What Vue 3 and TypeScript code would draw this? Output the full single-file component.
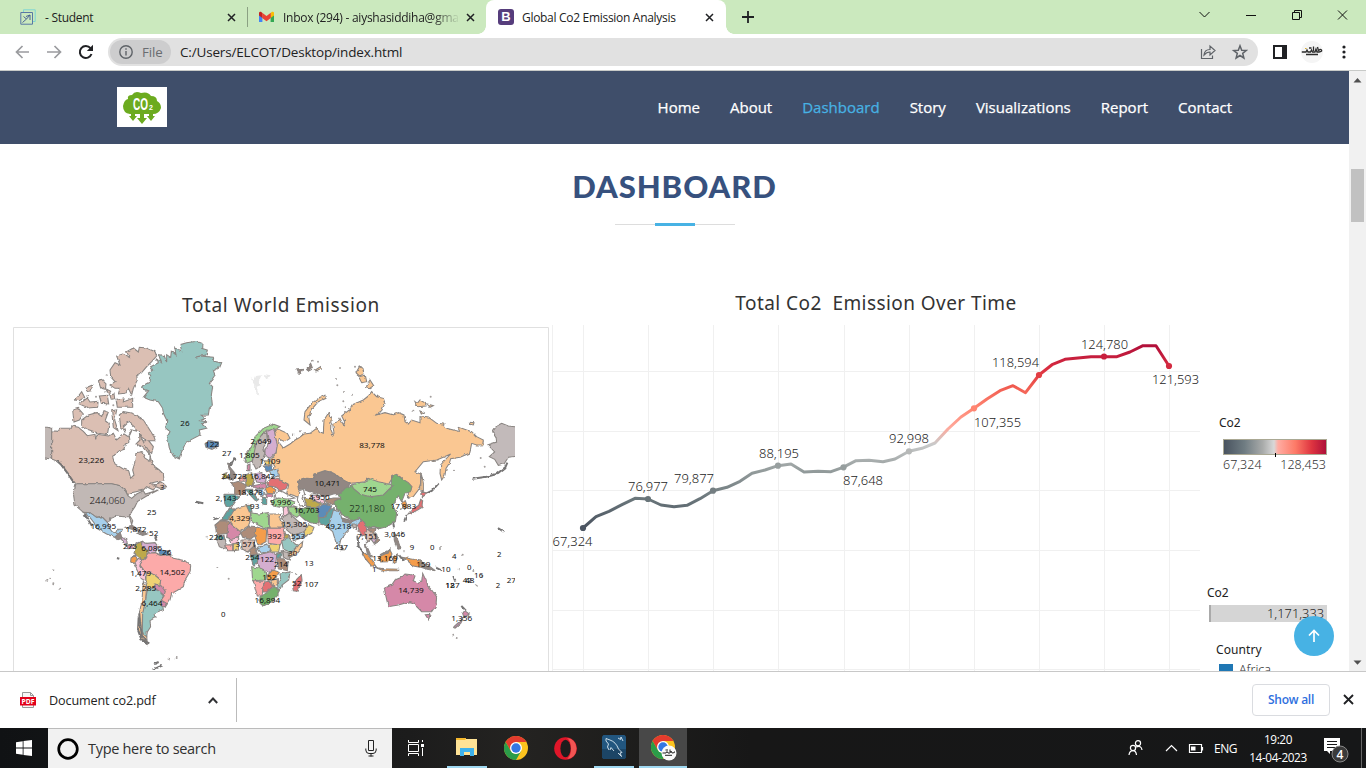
<script setup lang="ts">
interface Land { c: string; d: string }
interface Label { t: string; x: number; y: number; big?: boolean }

const nav: string[] = ['Home', 'About', 'Dashboard', 'Story', 'Visualizations', 'Report', 'Contact']

const ca = '#dbbfb3', us = '#c1b8b5', teal = '#97c6c1', or = '#fac792', gr = '#9fd78f', dg = '#74b16d'
const pu = '#d4aed0', pk = '#fcaaa9', lp = '#f9c6d8', mg = '#d588a8', br = '#ad8c79', go = '#bda94c'
const lb = '#a7d0eb', rd = '#e37073', dt = '#5fa3a0', bl = '#5c8bb8', yl = '#efd273', og = '#f49d4b', dk = '#928783'

/* Map units are a third of a pixel. */
const lands: Land[] = [
  { c: teal, d: '428,197 450,185 452,170 444,160 458,150 452,140 475,128 468,116 484,128 476,104 492,106 500,126 500,104 512,112 514,94 528,104 524,84 545,92 540,74 560,68 590,64 606,70 605,85 622,90 618,105 585,112 600,108 640,112 642,124 662,128 655,145 640,152 645,165 628,190 638,200 634,225 637,255 628,265 625,285 604,286 616,295 600,302 624,305 605,312 620,325 598,330 600,345 575,358 555,372 545,395 538,417 520,408 508,385 502,350 510,335 498,325 500,300 490,280 488,265 475,245 450,240 430,232 446,212 425,205' },
  { c: ca, d: '330,150 345,128 360,135 350,108 368,102 388,112 380,95 400,84 415,96 418,82 440,84 465,95 470,108 455,125 440,140 425,158 410,165 412,180 400,205 395,225 385,205 375,220 355,222 360,205 345,205 330,195 345,185 332,170' },
  { c: ca, d: '348,238 372,234 370,246 398,235 398,262 352,262' },
  { c: ca, d: '258,203 278,195 274,212 262,214' },
  { c: ca, d: '295,182 305,178 318,192 316,208 302,204' },
  { c: ca, d: '226,240 245,215 254,232 238,242' },
  { c: ca, d: '238,252 262,234 270,246 294,244 293,262 265,264' },
  { c: ca, d: '298,228 322,226 326,252 304,250' },
  { c: ca, d: '320,208 332,214 326,224' },
  { c: ca, d: '330,226 342,222 344,236 334,238' },
  { c: ca, d: '218,270 235,265 250,282 238,300 222,306' },
  { c: ca, d: '245,300 265,285 290,278 305,290 312,272 325,276 316,300 328,310 322,344 296,340 262,328 245,316' },
  { c: ca, d: '335,272 350,270 344,300 354,332 340,322' },
  { c: ca, d: '358,285 370,275 390,278 410,285 430,300 440,315 462,350 466,362 446,362 460,380 455,400 440,390 425,375 424,362 440,362 415,345 405,322 385,305 370,318 376,334 362,322' },
  { c: us, d: '125,322 142,322 155,325 155,417 125,413' },
  { c: ca, d: '155,332 175,334 180,325 215,325 215,318 235,322 250,334 262,347 285,343 287,358 292,343 325,348 340,340 350,360 362,350 372,342 385,350 395,330 420,345 435,375 445,390 455,425 465,440 478,450 490,462 492,480 470,485 450,490 470,495 460,510 440,500 430,510 395,518 384,526 375,510 360,497 335,491 228,491 215,480 205,460 190,445 175,425 155,417' },
  { c: '#fff', d: '388,348 396,330 418,335 420,360 408,372 432,382 450,405 450,424 434,414 425,395 408,398 404,430 398,450 402,465 392,475 386,452 370,447 345,432 338,412 352,394 372,387 376,372 390,366' },
  { c: ca, d: '462,498 480,485 490,490 500,500 480,505' },
  { c: us, d: '228,491 335,491 360,497 375,510 384,528 395,535 410,522 430,512 436,522 475,510 440,528 412,545 405,560 388,585 398,602 395,614 388,590 375,590 350,588 330,595 325,610 305,590 290,592 270,578 250,577 225,555 220,520' },
  { c: lb, d: '250,577 270,578 290,592 305,590 325,610 328,624 337,636 350,638 355,628 367,628 362,642 345,652 320,642 290,625 282,608 268,590' },
  { c: dk, d: '345,652 354,640 362,642 366,655 352,660' },
  { c: pu, d: '362,655 380,655 382,672 372,668' },
  { c: mg, d: '372,672 388,680 400,674 402,684 384,686' },
  { c: dk, d: '376,622 396,616 428,636 410,632' }, { c: dk, d: '412,640 426,636 442,642 428,646' },
  { c: go, d: '408,672 426,664 424,680 442,690 440,714 428,722 418,712 402,700' },
  { c: pu, d: '426,664 440,670 465,668 474,680 466,698 450,705 442,690 424,680' },
  { c: bl, d: '470,684 482,690 510,694 506,708 484,706' },
  { c: og, d: '393,714 406,706 412,718 400,730 392,726' },
  { c: lp, d: '402,732 415,715 430,722 420,737 434,750 438,784 424,776' },
  { c: pk, d: '440,714 442,700 466,698 484,706 508,702 520,715 555,722 572,738 570,755 555,780 550,800 530,812 515,820 510,840 495,862 480,845 492,828 478,805 482,780 465,765 440,760 430,748 420,735 428,720' },
  { c: yl, d: '438,762 450,758 465,766 482,780 480,792 466,795 460,806 444,802 438,782' },
  { c: mg, d: '466,792 484,798 496,814 492,826 478,814 464,804' },
  { c: mg, d: '483,840 500,850 492,861 482,858' },
  { c: or, d: '430,785 440,800 436,850 428,885 426,930 440,948 442,972 425,955 415,930 418,880 426,840' },
  { c: teal, d: '444,802 460,806 478,814 490,828 483,842 487,870 462,880 465,893 450,902 452,920 442,936 440,950 427,940 428,880 435,850 440,820' },
  { c: bl, d: '615,372 625,362 655,366 656,378 636,388 618,382' },
  { c: or, d: '822,325 840,330 862,340 870,355 855,365 838,358 836,366 850,384 870,372 885,360 895,355 912,342 930,340 950,325 955,334 970,340 972,300 985,280 993,295 992,330 998,345 1002,340 998,310 1015,305 1020,295 1030,314 1034,306 1025,288 1048,270 1056,255 1090,240 1105,228 1115,215 1130,230 1150,235 1155,250 1145,272 1125,286 1155,278 1180,285 1195,278 1212,285 1215,305 1225,312 1235,300 1260,308 1260,290 1290,295 1310,310 1330,312 1340,325 1375,334 1378,322 1400,330 1415,335 1430,350 1450,360 1448,374 1430,375 1415,370 1412,385 1408,400 1380,412 1352,416 1348,430 1338,445 1335,465 1325,480 1320,460 1322,435 1335,420 1352,402 1330,412 1310,420 1270,425 1245,455 1262,462 1262,490 1255,510 1240,530 1225,535 1225,510 1235,505 1220,490 1200,470 1185,465 1170,485 1165,495 1140,490 1110,480 1100,475 1095,485 1070,488 1050,490 1035,485 1010,465 990,455 970,455 945,465 940,475 910,480 893,485 895,505 905,510 898,534 880,526 860,520 866,495 850,485 830,470 820,455 825,440 812,420 828,400 830,375' },
  { c: or, d: '912,300 915,275 935,250 960,232 978,226 978,235 955,245 940,262 926,290 930,315' },
  { c: or, d: '1068,158 1080,137 1088,145 1092,162 1078,168' }, { c: or, d: '1076,170 1096,166 1100,185 1085,188' }, { c: or, d: '1100,195 1110,180 1121,197 1108,206 1100,204' },
  { c: or, d: '1245,245 1252,250 1260,240 1277,250 1278,258 1252,260' }, { c: or, d: '1282,252 1300,257 1290,262' }, { c: or, d: '1260,273 1272,278 1264,282' }, { c: or, d: '1408,307 1422,308 1420,315 1410,313' },
  { c: dk, d: '888,150 908,148 902,160 892,158' }, { c: dk, d: '920,146 932,130 938,146 928,152' }, { c: or, d: '946,150 962,140 964,148 948,156' },
  { c: '#c2baba', d: '1478,335 1490,318 1505,310 1525,318 1557,322 1557,408 1525,412 1512,432 1495,436 1484,418 1468,410 1484,396 1464,374 1490,366 1488,350' },
  { c: gr, d: '735,425 740,400 755,380 765,350 790,325 820,312 840,320 820,332 800,330 785,345 770,370 765,400 755,424 740,430' },
  { c: us, d: '762,400 770,365 785,345 800,338 802,360 790,380 795,402 780,440 768,447 757,425' },
  { c: pu, d: '800,335 822,325 826,350 832,375 828,398 810,415 795,407 795,390 806,368' },
  { c: bl, d: '790,438 815,436 818,450 800,455' }, { c: yl, d: '790,422 815,424 815,434 798,434' }, { c: lb, d: '808,452 830,448 838,466 818,474' },
  { c: dk, d: '683,430 697,432 690,442 702,456 708,474 690,480 682,474 692,464' }, { c: go, d: '668,462 681,458 682,474 670,477' },
  { c: mg, d: '742,436 750,432 750,452 742,452' }, { c: pk, d: '718,474 734,466 736,484 720,484' },
  { c: go, d: '735,465 755,458 762,480 756,500 738,498' }, { c: pu, d: '762,462 785,458 800,470 796,490 770,486' },
  { c: br, d: '695,490 716,484 738,495 736,520 720,525 704,522 704,505' }, { c: dt, d: '672,523 700,523 716,530 705,545 695,560 680,562 674,550' },
  { c: mg, d: '755,498 796,490 800,500 780,506' }, { c: dt, d: '738,508 758,508 758,520 776,538 768,544 750,524' },
  { c: lb, d: '768,508 788,506 796,520 784,530' }, { c: og, d: '795,505 812,498 828,510 822,522 802,520' }, { c: mg, d: '797,522 820,522 816,532 800,532' }, { c: dt, d: '784,530 800,534 800,552 790,556' },
  { c: rd, d: '800,488 816,474 840,480 864,492 858,506 842,512 825,500 804,498' },
  { c: '#fff', d: '825,528 834,512 850,516 860,522 884,534 850,540 830,536' },
  { c: gr, d: '812,542 835,534 865,538 884,546 872,560 840,562 820,558' },
  { c: dk, d: '893,484 920,475 940,478 945,462 975,452 1000,460 1020,475 1050,490 1040,505 1028,520 1000,522 975,530 960,525 940,520 915,510 905,505 896,505' },
  { c: '#fff', d: '897,512 910,508 914,522 906,535 916,556 900,558 892,540' },
  { c: lp, d: '930,525 950,526 972,540 975,552 950,545' }, { c: br, d: '975,540 1000,534 1026,534 1000,550 982,554' },
  { c: go, d: '912,532 932,536 962,552 950,565 920,558' },
  { c: dg, d: '1015,525 1035,505 1055,495 1080,515 1120,520 1150,515 1172,508 1175,470 1190,463 1205,475 1225,488 1236,500 1232,515 1215,520 1205,545 1196,530 1185,545 1176,552 1190,580 1186,605 1160,620 1140,625 1120,620 1105,625 1090,610 1080,595 1060,602 1035,590 1015,575 1010,560 1000,545 1020,535' },
  { c: gr, d: '1055,495 1075,488 1095,490 1105,475 1135,485 1165,492 1180,495 1165,510 1150,525 1110,530 1080,522 1060,505' },
  { c: dg, d: '882,558 905,566 925,560 950,565 956,592 956,612 935,608 915,600 898,585' },
  { c: bl, d: '950,566 970,552 995,558 985,580 970,594 956,592' }, { c: dt, d: '956,594 975,592 990,566 1004,566 1006,580 990,600 988,618 960,612' },
  { c: lb, d: '1000,570 1020,575 1025,595 1055,605 1080,595 1085,605 1072,618 1055,615 1050,625 1035,640 1022,660 1018,678 1008,668 998,635 980,620 990,605' },
  { c: dk, d: '1026,594 1056,602 1052,608 1028,602' }, { c: us, d: '1056,612 1068,612 1070,628 1060,624' }, { c: dk, d: '1024,680 1030,686 1024,692' },
  { c: gr, d: '862,562 884,560 900,584 890,592 870,580' }, { c: lp, d: '850,562 862,562 866,580 850,592' },
  { c: us, d: '845,595 868,580 890,600 905,612 925,622 912,636 880,646 860,630' }, { c: yl, d: '926,614 942,622 935,640 915,650 912,636' }, { c: lb, d: '878,646 912,636 915,650 880,662' },
  { c: dt, d: '665,600 680,575 697,562 705,576 690,588 684,600' }, { c: '#e4e2e2', d: '645,618 662,600 682,600 660,606' },
  { c: or, d: '705,566 742,556 752,575 750,605 745,618 718,635 690,610 690,590' }, { c: dt, d: '740,558 752,554 756,576 748,576' },
  { c: gr, d: '752,578 775,582 805,578 806,622 795,625 755,605' }, { c: or, d: '808,582 842,582 840,598 852,625 808,625' },
  { c: br, d: '645,615 662,602 686,604 686,640 650,644' }, { c: mg, d: '686,606 725,638 700,660 680,652' }, { c: br, d: '722,638 748,618 770,620 768,645 750,658 728,652' },
  { c: og, d: '768,620 800,630 798,665 775,677 765,650' }, { c: pk, d: '802,625 852,625 858,648 840,675 805,670' }, { c: go, d: '852,640 872,650 858,656' },
  { c: lp, d: '688,660 716,652 716,668 694,672' }, { c: us, d: '650,658 676,658 680,690 658,680' }, { c: dt, d: '648,648 672,646 674,658 650,658' }, { c: pk, d: '678,675 698,674 698,692 680,692' }, { c: yl, d: '700,672 714,670 716,690 700,692' },
  { c: ca, d: '726,660 765,660 760,680 742,696 726,686' }, { c: br, d: '748,694 765,675 772,702 752,706' }, { c: lb, d: '770,686 800,672 812,692 782,700' }, { c: yl, d: '806,676 840,674 836,696 815,695' },
  { c: teal, d: '845,662 870,655 880,670 898,676 870,696 850,688' }, { c: or, d: '880,692 908,665 906,680 890,700 870,712 868,700' },
  { c: dt, d: '752,710 775,702 776,724 760,736' }, { c: pu, d: '775,705 812,695 830,705 826,745 815,762 800,752 780,745 772,730' }, { c: dt, d: '830,700 844,696 842,714 830,714' }, { c: us, d: '846,694 868,698 868,720 848,712' },
  { c: br, d: '832,716 848,716 864,730 862,752 835,746' }, { c: gr, d: '755,740 780,745 800,758 798,780 758,782' }, { c: og, d: '800,768 818,750 838,756 826,776 804,782' }, { c: teal, d: '840,762 870,755 866,780 846,795 836,816 832,790 842,776' }, { c: or, d: '812,782 832,776 832,794 820,798' },
  { c: pk, d: '760,784 792,784 786,828 772,828' }, { c: rd, d: '792,786 808,784 820,798 800,816 788,816' }, { c: dg, d: '780,832 800,818 822,800 834,804 834,825 815,845 790,858 780,850' },
  { c: rd, d: '878,800 890,778 904,764 906,780 894,814 880,812' },
  { c: rd, d: '1072,618 1085,600 1098,620 1102,640 1086,648 1078,632' }, { c: ca, d: '1094,640 1105,628 1130,642 1132,656 1112,658 1100,668' }, { c: br, d: '1106,626 1128,624 1124,640 1140,662 1124,672 1132,654' }, { c: pu, d: '1112,656 1130,656 1122,670' },
  { c: dk, d: '1096,672 1104,686 1114,710 1102,702' }, { c: og, d: '1082,690 1108,710 1130,742 1115,738 1096,716' }, { c: og, d: '1125,742 1150,746 1196,748 1196,752 1150,752' },
  { c: og, d: '1136,710 1150,704 1170,690 1176,702 1165,725 1142,726' }, { c: dk, d: '1140,704 1170,688 1164,700' }, { c: og, d: '1180,710 1192,702 1188,728 1180,730' }, { c: og, d: '1206,712 1240,718 1264,724 1262,742 1240,738 1222,722' }, { c: dk, d: '1262,724 1290,740 1306,752 1282,748 1264,742' },
  { c: dk, d: '1180,636 1190,650 1202,686 1192,688 1184,664' }, { c: rd, d: '1224,582 1236,568 1256,556 1262,538 1268,542 1266,562 1246,574' }, { c: rd, d: '1262,522 1268,514 1280,522 1268,530' }, { c: og, d: '1204,548 1216,542 1222,560 1214,568' }, { c: or, d: '1264,462 1270,490 1270,512 1262,510' },
  { c: mg, d: '1153,805 1175,795 1185,780 1205,772 1215,762 1235,764 1245,768 1240,782 1255,790 1265,785 1268,760 1275,775 1280,795 1295,810 1310,830 1308,855 1295,875 1265,875 1250,860 1246,850 1230,845 1195,855 1165,860 1158,830' },
  { c: mg, d: '1276,884 1290,883 1286,900' }, { c: mg, d: '1394,872 1408,882 1392,892 1388,880' }, { c: '#b687a8', d: '1362,920 1390,894 1382,910 1366,924' }
]

const coast: string[] = [
  'M170 422L186 436L204 462L222 488', 'M416 892L414 930L424 958L448 970', 'M418 880L420 908L426 948L440 962', 'M1418 476L1460 470L1490 462L1516 442L1522 428', 'M254 582L276 618', 'M1384 858L1398 872', 'M456 1050L488 1036', 'M462 1032L476 1026', 'M1072 650L1076 680L1092 700',
  'M1316 490L1296 512L1280 520', 'M1220 585L1212 605', 'M1494 624L1512 636', 'M1306 742L1326 752', 'M1360 768L1366 785', 'M588 545L610 550', 'M690 440L704 412', 'M1198 706L1210 722', 'M1180 610L1182 622', 'M350 714L358 716', 'M464 650L470 662', 'M640 598L656 594'
]

const specks: number[][] = [[938, 122], [954, 125], [1020, 144], [1008, 174], [1065, 140], [1012, 196], [1032, 216], [1056, 224], [1030, 244], [1034, 262], [1046, 264], [1240, 272], [1292, 230], [880, 342], [900, 334], [1442, 414], [1454, 440], [1362, 452], [150, 776], [160, 750], [142, 782], [160, 790], [178, 806], [620, 650], [652, 744], [1320, 684], [1388, 704], [1420, 750], [1430, 796], [1360, 944], [1370, 954], [530, 1014], [506, 1016], [320, 166], [316, 216], [288, 230], [340, 256], [262, 228], [1376, 748], [1446, 768], [876, 756], [886, 762], [1212, 694], [1206, 640], [686, 776]]

const labels: Label[] = [
  ['23,226', 274, 430], ['26', 555, 319], ['122', 636, 382], ['27', 680, 407], ['1,805', 748, 413], ['2,649', 783, 371], ['1,109', 810, 433], ['24,728', 702, 477], ['16,842', 787, 477], ['3', 487, 511],
  ['25', 455, 585], ['16,995', 310, 628], ['1,872', 408, 636], ['52', 461, 647], ['275', 390, 687], ['6,085', 455, 694], ['26', 500, 705], ['1,479', 422, 768], ['14,502', 517, 765], ['2,285', 437, 813], ['6,464', 456, 858], ['0', 670, 891],
  ['4,329', 719, 603], ['93', 764, 568], ['18,878', 750, 526], ['2,143', 678, 543], ['226', 648, 660], ['3,571', 738, 681], ['254', 757, 721], ['122', 801, 726], ['392', 824, 656], ['152', 808, 780], ['16,894', 802, 849], ['214', 843, 742], ['30', 878, 708], ['13', 927, 738], ['52', 890, 798], ['107', 934, 801],
  ['9,996', 842, 554], ['16,703', 920, 580], ['4,950', 958, 540], ['15,305', 883, 621], ['553', 894, 657], ['49,218', 1015, 626], ['437', 1023, 690], ['10,471', 982, 499], ['745', 1110, 515], ['83,778', 1116, 385], ['17,883', 1210, 566], ['7,151', 1102, 657], ['3,046', 1184, 651],
  ['9', 1236, 690], ['0', 1297, 690], ['4', 1363, 718], ['2', 1498, 711], ['0', 1408, 750], ['16', 1436, 773], ['42', 1402, 788], ['48', 1409, 788], ['12', 1350, 804], ['187', 1358, 804], ['10', 1338, 755], ['2', 1494, 803], ['27', 1534, 788], ['159', 1270, 742], ['13,169', 1155, 722], ['1', 1123, 757], ['14,739', 1233, 818], ['1,356', 1385, 902]
].map(([t, x, y]) => ({ t: t as string, x: x as number, y: y as number }))
labels.push({ t: '244,060', x: 322, y: 551, big: true }, { t: '221,180', x: 1101, y: 575, big: true })

function span(l: Label): number {
  const digits = l.t.replace(',', '').length
  return digits * (l.big ? 17 : 14.4) + (l.t.includes(',') ? 6 : 0) - 1
}

const vGrid: number[] = [552, 583, 648, 713, 778, 844, 909, 974, 1039, 1104, 1169]
const hGrid: number[] = [371, 431, 490, 550, 610, 669]
const series = '583,528 596,516.7 609,511.3 622,504.7 635,498.3 648,499 661,505 674,506.7 687,505.3 700,498.7 713,490.7 727,487.3 740,481.3 752,473.3 765,470 778,465.7 791,464 804,472 818,471.3 831,471.7 843,467.3 856,460.7 869,460.3 883,461.7 895,459 909,451.3 922,448.3 935,443 948,429 961,417 974,408.3 987,399 1000,390.7 1013,385.7 1025.5,392.7 1039,375 1052,364.7 1065,359.3 1078,358 1091,356.7 1104,356.7 1117,356.7 1130,352 1143,345.7 1156,345.7 1169,366'
const marks = [
  { x: 583, y: 528, c: '#4b5562', t: '67,324', tx: 552.5, ty: 546 }, { x: 648, y: 499, c: '#687479', t: '76,977', tx: 628, ty: 491 },
  { x: 713, y: 490.7, c: '#747e82', t: '79,877', tx: 674, ty: 483 }, { x: 778, y: 465.7, c: '#989f9f', t: '88,195', tx: 759, ty: 458 },
  { x: 843.5, y: 467.3, c: '#969e9e', t: '87,648', tx: 843, ty: 485 }, { x: 909, y: 451.3, c: '#b7b9b8', t: '92,998', tx: 889, ty: 443 },
  { x: 974, y: 408.3, c: '#ff8571', t: '107,355', tx: 974, ty: 427 }, { x: 1039, y: 375, c: '#e23d43', t: '118,594', tx: 992, ty: 367 },
  { x: 1104, y: 356.5, c: '#c81f3d', t: '124,780', tx: 1081, ty: 349 }, { x: 1169, y: 366, c: '#d32a40', t: '121,593', tx: 1152, ty: 384 }
]
</script>

<template>
  <div class="screen">
    <header class="tabs">
      <div class="tab first">
        <svg class="fav" width="16" height="16" viewBox="0 0 16 16" fill="none"><path d="M3.500 .8H15.200V12.500H12.500M3.500 .8V3.200" stroke="#7fd6d2" /><path d="M.8 3.500H12.500V15.200H.8z" stroke="#5977a4" /><path d="M2.500 13.500L6.500 10L3.500 7.500M6 7.500L10 6M10 6V11M10 6L6.500 10" stroke="#4a6393" stroke-width="1" /></svg>
        <span class="t1">- Student</span>
        <svg class="x" width="9" height="9" viewBox="0 0 9 9"><path d="M1 1L8 8M8 1L1 8" /></svg>
      </div>
      <div class="tab second">
        <svg class="fav" width="15" height="12" viewBox="0 0 15 12"><path d="M0 2V11H3.400V4z" fill="#4285f4" /><path d="M15 2V11H11.600V4z" fill="#34a853" /><path d="M0 2V4.500L3.400 7V2L2 .8Q0 .5 0 2z" fill="#c5221f" /><path d="M15 2V4.500L11.600 7V2L13 .8Q15 .5 15 2z" fill="#fbbc04" /><path d="M3.200 1.800L7.500 5.100L11.800 1.800V7L7.500 10.200L3.200 7z" fill="#ea4335" /></svg>
        <span class="t2">Inbox (294) - aiyshasiddiha@gmail</span>
        <svg class="x" width="9" height="9" viewBox="0 0 9 9"><path d="M1 1L8 8M8 1L1 8" /></svg>
      </div>
      <div class="tab active">
        <b class="boot">B</b>
        <span class="t3">Global Co2 Emission Analysis</span>
        <svg class="x" width="9" height="9" viewBox="0 0 9 9"><path d="M1 1L8 8M8 1L1 8" /></svg>
      </div>
      <svg class="plus" width="12" height="12" viewBox="0 0 12 12"><path d="M6 0V12M0 6H12" stroke="#202124" stroke-width="1.8" /></svg>
      <svg class="winctl" width="150" height="13" viewBox="0 0 150 13" fill="none" stroke="#111"><path d="M.5 4L5.500 9L10.500 4" /><path d="M47 7.500H57" /><path d="M93.500 4.500H100.500V11.500H93.500zM95.500 4V2.500H102.500V9.500H101" /><path d="M139 2.500L148 11.500M148 2.500L139 11.500" /></svg>
    </header>

    <div class="toolbar">
      <svg class="navicons" width="80" height="16" viewBox="0 0 80 16" fill="none" stroke-width="1.7"><path d="M14 8H1.500M7.500 2L1.500 8L7.500 14" stroke="#9a9b9e" /><path d="M32 8H45.500M39.500 2L45.500 8L39.500 14" stroke="#9a9b9e" /><path d="M76.500 10A6 6 0 1 1 75.500 4.200" stroke="#202124" stroke-width="2" /><path d="M78 .8V7H71.800z" fill="#202124" /></svg>
      <div class="omnibox">
        <div class="chip">
          <svg width="14" height="14" viewBox="0 0 14 14" fill="none" stroke="#5f6368" stroke-width="1.4"><circle cx="7" cy="7" r="6.200" /><path d="M7 6V10.500M7 3.300V4.700" /></svg>
          <span>File</span>
        </div>
        <span class="url">C:/Users/ELCOT/Desktop/index.html</span>
        <svg class="share" width="48" height="16" viewBox="0 0 48 16" fill="none" stroke="#5f6368" stroke-width="1.200"><path d="M1.500 5V14.500H12.500V11.500M4 11Q4.500 5.500 10 5.500V2L15 6.500L10 11V8Q6.500 8 4 11z" /><path d="M40 1.800L41.700 6.200L46.300 6.500L42.700 9.400L43.900 14L40 11.500L36.100 14L37.300 9.400L33.700 6.500L38.300 6.200z" stroke-width="1.500" /></svg>
      </div>
      <svg class="panel" width="14" height="14" viewBox="0 0 14 14"><path d="M0 0H14V14H0z" fill="#202124" /><path d="M2 2H9V12H2z" fill="#fff" /></svg>
      <svg class="avatar" width="22" height="22" viewBox="0 0 22 22"><circle cx="11" cy="11" r="11" fill="#f5f5f5" /><path d="M.8 11H5L6 9L7 11H9.500L10.500 9L11.500 11H14L15 8L16 11H18Q21.500 10.500 20.500 9Q19 7.500 18 9.500M16.500 6L17.500 10M12.500 5.500V10M8 7H10.500M5 13.500H17" fill="none" stroke="#2b2b2b" stroke-width="1.300" /><path d="M4 7.500H5.500" stroke="#d6ae2f" /></svg>
      <svg class="dots" width="4" height="14" viewBox="0 0 4 14" fill="#202124"><circle cx="2" cy="2" r="1.600" /><circle cx="2" cy="7" r="1.600" /><circle cx="2" cy="12" r="1.600" /></svg>
    </div>

    <div class="view">
      <main class="page">
        <nav class="nav">
          <svg class="logo" width="50" height="40" viewBox="0 0 50 40"><path d="M0 0H50V40H0z" fill="#fff" /><path d="M13 27Q6 26 6 19Q7 13 11 12Q10 8 15 8Q18 3 24 6Q31 4 34 9Q40 9 40 14Q44 16 44 21Q42 27 36 27z" fill="#6cab1f" /><path d="M14 25H18V29H20L16 34L12 29H14zM23 25H27V31H30L25 37L20 31H23zM32 25H36V29H38L34 34L30 29H32z" fill="#6cab1f" /><text x="16" y="22.500" textLength="15" lengthAdjust="spacingAndGlyphs" class="logo-text">CO</text><text x="32" y="23" class="logo-sub">2</text></svg>
          <div class="links"><a v-for="item in nav" :key="item" :class="{ on: item === 'Dashboard' }">{{ item }}</a></div>
        </nav>
        <div class="heading"><h2>DASHBOARD</h2><i class="rule"><i></i></i></div>

        <div class="dash">
          <section class="world">
            <h3>Total World Emission</h3>
            <svg class="map" width="536" height="344" viewBox="39 21 1608 1032">
              <defs>
                <filter id="rough" x="0" y="0" width="100%" height="100%"><feTurbulence type="fractalNoise" baseFrequency=".07" numOctaves="2" seed="4" /><feDisplacementMap in="SourceGraphic" scale="9" xChannelSelector="R" yChannelSelector="G" /></filter>
                <clipPath id="extent"><path d="M135 24H1545V1053H135z" /></clipPath>
              </defs>
              <g clip-path="url(#extent)">
                <g filter="url(#rough)">
                  <path d="M752 172L764 178L768 168L784 166L776 186L782 196L770 200L775 225L765 212L766 194zM790 162L812 166L800 180zM765 160L775 165" fill="#e9e9e9" />
                  <polygon v-for="(p, i) in lands" :key="i" :points="p.d" :fill="p.c" stroke="#8a8582" stroke-width="3.200" />
                  <path v-for="c in coast" :key="c" :d="c" fill="none" stroke="#767474" stroke-width="6" />
                  <circle v-for="(s, i) in specks" :key="'s' + i" :cx="s[0]" :cy="s[1]" r="3" fill="#a39f9d" />
                </g>
                <text v-for="(l, i) in labels" :key="'l' + i" :x="l.x" :y="l.y" :textLength="span(l)" lengthAdjust="spacingAndGlyphs" :class="['num', { big: l.big }]">{{ l.t }}</text>
              </g>
              <path d="M40.500 1053V22.500H1645.500V1053" fill="none" stroke="#e0e0e0" stroke-width="3" />
            </svg>
          </section>

          <section class="trend">
            <h3>Total Co2&nbsp; Emission Over Time</h3>
            <svg width="648" height="346" viewBox="552 325 648 346">
              <defs>
                <linearGradient id="tone" gradientUnits="userSpaceOnUse" x1="0" y1="528" x2="0" y2="346">
                  <stop offset="0" stop-color="#49525f" /><stop offset=".15" stop-color="#687479" /><stop offset=".32" stop-color="#959d9d" /><stop offset=".46" stop-color="#c9caca" /><stop offset=".55" stop-color="#ffa99c" /><stop offset=".66" stop-color="#ff8571" /><stop offset=".78" stop-color="#f05a4f" /><stop offset=".88" stop-color="#d92c40" /><stop offset="1" stop-color="#b2103a" />
                </linearGradient>
              </defs>
              <rect v-for="v in vGrid" :key="'v' + v" :x="v" y="325" width="1" height="346" fill="#f0f0f0" />
              <rect v-for="h in hGrid" :key="'h' + h" x="552" :y="h" width="648" height="1" fill="#f0f0f0" />
              <polyline :points="series" fill="none" stroke="url(#tone)" stroke-width="3" stroke-linejoin="round" />
              <g v-for="m in marks" :key="m.t"><circle :cx="m.x" :cy="m.y" r="3.100" :fill="m.c" /><text :x="m.tx" :y="m.ty" :textLength="m.t.length > 6 ? 47 : 40" lengthAdjust="spacingAndGlyphs" class="val">{{ m.t }}</text></g>
            </svg>
          </section>

          <aside class="legend">
            <span class="cap c1">Co2</span>
            <div class="ramp"><i></i></div>
            <div class="range"><span>67,324</span><span>128,453</span></div>
            <span class="cap c2">Co2</span>
            <div class="total">1,171,333</div>
            <span class="cap c3">Country</span>
            <div class="entry"><i></i><span>Africa</span></div>
          </aside>
        </div>
        <div class="totop"><svg width="14" height="14" viewBox="0 0 14 14" fill="none" stroke="#fff" stroke-width="1.700"><path d="M7 13V1.500M2 6.500L7 1.500L12 6.500" /></svg></div>
      </main>
      <div class="scroll"><svg width="9" height="5" viewBox="0 0 9 5"><path d="M4.500 0L8.500 4.500H.5z" /></svg><div class="thumb"></div><svg width="9" height="5" viewBox="0 0 9 5"><path d="M.5 .5H8.500L4.500 4.800z" /></svg></div>
    </div>

    <div class="downloads">
      <svg class="pdf" width="16" height="16" viewBox="0 0 16 16"><path d="M2.500 .5H10.500L13.500 3.500V15.500H2.500z" fill="#f7f7f7" stroke="#999" /><path d="M10.500 .5V3.500H13.500" fill="none" stroke="#999" /><path d="M0 5H16V13.500H0z" fill="#e2001a" /><text x="1.500" y="11.800" textLength="13" lengthAdjust="spacingAndGlyphs" class="pdf-text">PDF</text></svg>
      <span class="file">Document co2.pdf</span>
      <svg class="up" width="10" height="7" viewBox="0 0 10 7"><path d="M.8 6L5 1.500L9.200 6" fill="none" stroke="#303134" stroke-width="1.900" /></svg>
      <i class="sep"></i>
      <button>Show all</button>
      <svg class="x big" width="11" height="11" viewBox="0 0 9 9"><path d="M.8 .8L8.200 8.200M8.200 .8L.8 8.200" /></svg>
    </div>

    <footer class="taskbar">
      <div class="start"><svg width="16" height="16" viewBox="0 0 16 16" fill="#fff"><path d="M0 2.200L6.700 1.200V7.500H0zM7.500 1.100L16 0V7.500H7.500zM0 8.400H6.700V14.800L0 13.800zM7.500 8.400H16V16L7.500 14.900z" /></svg></div>
      <div class="search">
        <svg width="22" height="22" viewBox="0 0 22 22"><circle cx="11" cy="11" r="9.300" fill="none" stroke="#000" stroke-width="2.700" /></svg>
        <span>Type here to search</span>
        <svg class="mic" width="12" height="17" viewBox="0 0 12 17" fill="none" stroke="#222"><path d="M3.500 .5H8.500V10.500H3.500zM.8 8.500V10Q1 13.500 4 13.500H8Q11 13.500 11.200 10V8.500M6 13.500V16.500M3.500 16H8.500" /></svg>
      </div>
      <div class="app view-btn"><svg width="17" height="16" viewBox="0 0 17 16" fill="none" stroke="#fff"><path d="M.5 0V2.500H10.500V0M.5 16V13.500H10.500V16M.5 4.500H10.500V11.500H.5zM14.500 0V2M14.500 8V16" /><path d="M13 4H16V7H13z" fill="#fff" stroke="none" /></svg></div>
      <div class="app files"><svg width="22" height="19" viewBox="0 0 22 19"><path d="M0 0H10V3H0z" fill="#f5b92e" /><path d="M0 2H9L10 1H21V17H0z" fill="#ffe396" /><path d="M4 18V10H18V18H14V14H8V18z" fill="#3eb2ec" /></svg></div>
      <div class="app chrome">
        <svg width="24" height="24" viewBox="0 0 24 24"><circle cx="12" cy="12" r="12" fill="#fcc31e" /><path d="M12 12L6.800 15L1.600 6A12 12 0 0 1 22.400 6H12z" fill="#e33b2e" /><path d="M1.600 6L6.800 15Q9 18 12 18L17.200 15L12 24A12 12 0 0 1 1.600 6z" fill="#2b9c49" /><circle cx="12" cy="12" r="6" fill="#fff" /><circle cx="12" cy="12" r="4.700" fill="#3477e3" /></svg>
      </div>
      <div class="app opera"><svg width="23" height="23" viewBox="0 0 23 23"><ellipse cx="11.500" cy="11.500" rx="11.300" ry="11.300" fill="#e01629" /><path d="M13 1Q22 2 22.500 11.500Q22 21 13 22Q17 19 17 11.500Q17 4 13 1z" fill="#f15553" /><ellipse cx="11.500" cy="11.500" rx="5.100" ry="8.700" fill="#1e1d1d" /></svg></div>
      <div class="app mysql"><svg width="24" height="24" viewBox="0 0 24 24"><path d="M1.500 0H22.500L24 1.500V22.500L22.500 24H1.500L0 22.500V1.500z" fill="#22567f" /><path d="M0 14H24V22.500L22.500 24H1.500L0 22.500z" fill="#1c4566" /><path d="M7 15L5.500 12L6.500 9L4 6V3.500L8 5Q14 7 16.500 14L20 17.500L18 18L19.500 21.500L16 18M8 15L9 12.500L12 16M16 3L18.500 4.500L19 2L21 6" fill="none" stroke="#dceaf3" stroke-width=".9" /></svg></div>
      <div class="app current">
        <svg width="26" height="26" viewBox="0 0 26 26"><circle cx="12" cy="12" r="12" fill="#fcc31e" /><path d="M12 12L6.800 15L1.600 6A12 12 0 0 1 22.400 6H12z" fill="#e33b2e" /><path d="M1.600 6L6.800 15Q9 18 12 18L17.200 15L12 24A12 12 0 0 1 1.600 6z" fill="#2b9c49" /><circle cx="12" cy="12" r="6" fill="#fff" /><circle cx="12" cy="12" r="4.700" fill="#3477e3" /><circle cx="18" cy="18" r="7.500" fill="#fafafa" /><path d="M11.500 18H15L16 16.500L17 18H19L20 16L21 18Q24.500 18 23.500 16.500M19 14.500V17M14.500 15H17M14 20.300H21" fill="none" stroke="#222" stroke-width="1" /></svg>
      </div>
      <svg class="tray" width="82" height="16" viewBox="0 0 82 16" fill="none" stroke="#fff" stroke-width="1.200"><circle cx="5" cy="8" r="2.600" /><path d="M1 15Q1.500 10.600 5 10.600Q8 10.600 8.500 15" /><circle cx="10" cy="3.300" r="2.600" /><path d="M8 7Q13.500 5 14 10" /><path d="M38 11L43.500 5.500L49 11" /><path d="M61.500 4.500H73.500V12.500H61.500zM74.500 7V10.500" /><path d="M63 6.500H67.500V10.500H63z" fill="#fff" stroke="none" /></svg>
      <span class="lang">ENG</span>
      <div class="clock"><span>19:20</span><span>14-04-2023</span></div>
      <svg class="note" width="25" height="26" viewBox="0 0 25 26"><path d="M0 0H16V13H6V16L3 13H0z" fill="#fff" /><path d="M3 3.500H13M3 6.500H13M3 9.500H13" stroke="#1a1a1a" /><circle cx="16" cy="16" r="8" fill="#3a3a3a" stroke="#888" /><text x="12.600" y="20.500" class="badge">4</text></svg>
      <i class="edge"></i>
    </footer>
  </div>
</template>

<style>
body { margin: 0; overflow: hidden; }
</style>

<style scoped>
.screen { width: 1366px; height: 768px; display: flex; flex-direction: column; background: #fff; font-family: "Open Sans", "Noto Sans", sans-serif; color: #222; overflow: hidden; }
.screen * { box-sizing: border-box; }
svg { display: block; flex: none; }
span { white-space: nowrap; }
.tabs { height: 34px; flex: none; background: #cbe9be; display: flex; align-items: center; font-size: 12px; }
.tab { height: 34px; display: flex; align-items: center; }
.x { stroke: #202124; stroke-width: 1.5; margin-left: auto; }
.first { width: 247px; padding: 0 11px 0 20px; }
.t1 { margin-left: 9px; letter-spacing: -.3px; }
.second { width: 239px; padding: 0 11px 0 12px; position: relative; }
.second::before { content: ""; width: 1px; height: 20px; background: #8ba183; position: absolute; left: 0; top: 7px; }
.t2 { margin-left: 9px; width: 177px; overflow: hidden; letter-spacing: -.25px; mask-image: linear-gradient(90deg, #000 150px, transparent 177px); }
.active { width: 240px; padding: 0 12px 0 12px; background: #fff; border-radius: 8px 8px 0 0; position: relative; }
.active::before, .active::after { content: ""; position: absolute; bottom: 0; width: 8px; height: 8px; }
.active::before { left: -8px; background: radial-gradient(circle at 0 0, transparent 7.5px, #fff 8px); }
.active::after { right: -8px; background: radial-gradient(circle at 100% 0, transparent 7.5px, #fff 8px); }
.boot { width: 16px; height: 16px; border-radius: 3px; background: #563d7c; color: #fff; font: bold 13px/16px "Liberation Sans", sans-serif; text-align: center; }
.t3 { margin-left: 8px; letter-spacing: -.3px; }
.plus { margin-left: 16px; }
.winctl { margin-left: 445px; margin-top: -6px; }
.toolbar { height: 37px; flex: none; border-bottom: 1px solid #c8cac8; display: flex; align-items: center; }
.navicons { margin-left: 15px; }
.omnibox { width: 1150px; height: 28px; margin-left: 13px; border-radius: 14px; background: #e1e1e1; display: flex; align-items: center; font-size: 14px; padding-left: 2px; }
.chip { width: 61px; height: 24px; border-radius: 12px; background: #cdcdce; display: flex; align-items: center; padding-left: 9px; gap: 9px; color: #696c70; font-size: 13.3px; letter-spacing: -.1px; }
.url { margin-left: 9px; font-size: 13.5px; letter-spacing: -.17px; }
.share { margin-left: auto; margin-right: 10px; }
.panel { margin-left: 15px; }
.avatar { margin-left: 14px; }
.dots { margin-left: 19px; }
.view { height: 600px; flex: none; display: flex; overflow: hidden; }
.page { width: 1349px; position: relative; }
.nav { height: 73px; background: #3f4e6a; display: flex; align-items: center; padding: 0 117px 2px 117px; justify-content: space-between; }
.logo-text { font: bold 16px "Liberation Sans", sans-serif; fill: #fff; }
.logo-sub { font: bold 7px "Liberation Sans", sans-serif; fill: #fff; }
.links { display: flex; gap: 30px; font-size: 15px; font-weight: 500; color: #fff; -webkit-text-stroke: .25px currentColor; }
.links .on { color: #47b2e4; }
.heading { height: 148px; display: flex; flex-direction: column; align-items: center; }
h2 { margin: 22px 0 0; font: 900 31px/40px Lato, sans-serif; letter-spacing: .95px; color: #37517e; }
.rule { width: 120px; height: 1px; background: #ddd; margin-top: 18px; }
.rule i { display: block; width: 40px; height: 3px; background: #47b2e4; margin: -1px auto 0; }
.dash { display: flex; height: 379px; }
h3 { margin: 0; font: 400 19px/26px "Noto Sans", sans-serif; letter-spacing: .6px; color: #333; text-align: center; white-space: pre; }
.world { width: 536px; margin-left: 13px; }
.world h3 { height: 35px; }
.trend { width: 648px; margin-left: 3px; }
.trend h3 { height: 33px; line-height: 23px; letter-spacing: .43px; }
.num { font: 23.5px "Noto Sans", sans-serif; fill: #111; text-anchor: middle; }
.num.big { font-size: 28px; font-weight: 300; }
.val { font: 300 12.5px "Noto Sans", sans-serif; fill: #1c1c1c; }
.legend { width: 149px; padding-top: 123px; display: flex; flex-direction: column; align-items: flex-start; font-family: "Noto Sans", sans-serif; }
.cap { font-size: 12px; line-height: 16px; height: 16px; }
.c1 { margin-left: 19px; }
.ramp { width: 104px; height: 16px; margin: 8px 0 0 23px; border: 1px solid #aaa893; background: linear-gradient(90deg, #49535f, #6f7c82 20%, #a9abaa 38%, #d8d8d8 49%, #ffaca2 53%, #fd7a67 70%, #de3440 86%, #ae1039); }
.ramp i { display: block; width: 1px; height: 4px; background: #000; margin: 13px 0 0 51px; }
.range { width: 103px; margin: 1px 0 0 23px; display: flex; justify-content: space-between; font-size: 12.5px; font-weight: 300; line-height: 17px; color: #333; }
.c2 { margin: 112px 0 0 7px; }
.total { width: 118px; height: 18px; margin: 4px 0 0 9px; border-left: 2px solid #aaa; background: #d5d5d5; text-align: right; padding-right: 3px; font-size: 12.8px; font-weight: 300; line-height: 17px; color: #222; }
.c3 { margin: 20px 0 0 16px; letter-spacing: .1px; }
.entry { margin: 5px 0 0 19px; display: flex; gap: 6px; height: 14px; font-size: 12.5px; font-weight: 300; line-height: 14px; color: #333; }
.entry i { width: 14px; height: 14px; background: #1f77b4; margin-top: 1px; }
.totop { position: absolute; left: 1294px; top: 545px; width: 40px; height: 40px; border-radius: 50%; background: #47b2e4; display: flex; align-items: center; justify-content: center; }
.scroll { width: 17px; background: #f1f1f1; display: flex; flex-direction: column; align-items: center; padding: 7px 0 6px; fill: #505050; }
.thumb { width: 13px; height: 53px; background: #c1c1c1; margin: 86px 0 auto; }
.downloads { height: 57px; flex: none; border-top: 1px solid #c8c8c8; display: flex; align-items: center; padding-left: 20px; }
.file { margin-left: 13px; font-size: 12.6px; letter-spacing: -.12px; width: 159px; }
.pdf-text { font: bold 7px "Open Sans", sans-serif; fill: #fff; }
.sep { width: 1px; height: 44px; background: #bbb; margin-left: 18px; }
button { margin-left: auto; width: 78px; height: 32px; border: 1px solid #dadce0; border-radius: 4px; background: #fff; color: #2f6fde; font: 600 12px "Open Sans", sans-serif; padding: 0 0 2px; letter-spacing: -.25px; }
.x.big { margin: -2px 12px 0 13px; }
.taskbar { height: 40px; flex: none; background: linear-gradient(90deg, #101214, #1c1c1c 30%, #242321 38%, #171717 55%, #161718); display: flex; align-items: center; color: #fff; }
.start { width: 48px; display: flex; justify-content: center; }
.search { width: 344px; height: 40px; background: #f1f1f1; border-top: 1px solid #bbb; display: flex; align-items: center; padding: 0 15px 0 9px; color: #303030; font-size: 14.5px; }
.search span { margin-left: 9px; letter-spacing: -.3px; }
.mic { margin-left: auto; }
.app { height: 40px; width: 49px; display: flex; align-items: center; justify-content: center; }
.view-btn { width: 48px; }
.files { width: 40px; margin-left: 7px; border-bottom: 2px solid #9fd8f1; }
.chrome { width: 57px; }
.opera { width: 40px; margin-left: 1px; }
.mysql { width: 40px; margin-left: 9px; border-bottom: 2px solid #9fd8f1; }
.current { width: 48px; margin-left: 5px; padding: 2px 0 0 2px; background: #484848; border-bottom: 2px solid #9fd8f1; }
.tray { margin-left: auto; }
.lang { margin-left: 4px; width: 24px; font-size: 12px; letter-spacing: -.5px; }
.clock { margin-left: 9px; width: 62px; display: flex; flex-direction: column; align-items: center; font-size: 11.8px; line-height: 18px; letter-spacing: -.4px; margin-top: -1px; }
.note { margin-left: 15px; margin-top: 5px; }
.badge { font: 600 12px "Open Sans", sans-serif; fill: #fff; }
.edge { width: 1px; height: 40px; margin: 0 4px 0 12px; background: #666; }
</style>
